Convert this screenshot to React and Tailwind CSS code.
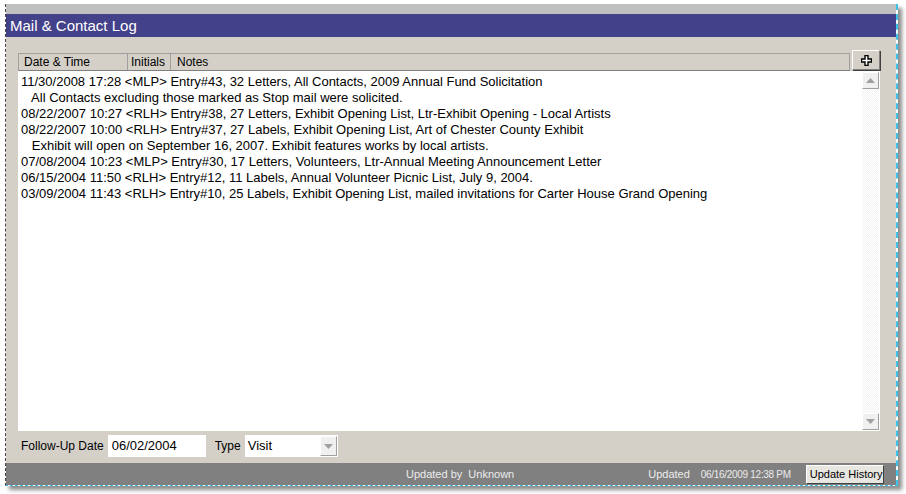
import React from "react";

const rows = [
  "11/30/2008 17:28 <MLP> Entry#43, 32 Letters, All Contacts, 2009 Annual Fund Solicitation",
  "   All Contacts excluding those marked as Stop mail were solicited.",
  "08/22/2007 10:27 <RLH> Entry#38, 27 Letters, Exhibit Opening List, Ltr-Exhibit Opening - Local Artists",
  "08/22/2007 10:00 <RLH> Entry#37, 27 Labels, Exhibit Opening List, Art of Chester County Exhibit",
  "   Exhibit will open on September 16, 2007. Exhibit features works by local artists.",
  "07/08/2004 10:23 <MLP> Entry#30, 17 Letters, Volunteers, Ltr-Annual Meeting Announcement Letter",
  "06/15/2004 11:50 <RLH> Entry#12, 11 Labels, Annual Volunteer Picnic List, July 9, 2004.",
  "03/09/2004 11:43 <RLH> Entry#10, 25 Labels, Exhibit Opening List, mailed invitations for Carter House Grand Opening",
];

function Arrow({ down }) {
  return (
    <svg width="9" height="5" viewBox="0 0 9 5">
      <polygon points={down ? "0,0 9,0 4.5,5" : "0,5 9,5 4.5,0"} fill="#a0a0a0" />
    </svg>
  );
}

export default function App() {
  return (
    <div className="w-[906px] h-[494px] bg-white overflow-hidden font-['Liberation_Sans',Arial,sans-serif] text-[12px] text-black">
      <div className="ml-[5px] mt-[4px] w-[893px] h-[482px] flex flex-col border-l border-dashed border-l-[#444] border-r-2 border-r-[#3fc0e8] border-b border-b-[#3fc0e8] shadow-[4px_4px_4px_rgba(0,0,0,0.45)]">
        <div className="h-[10px] bg-[#c0c0c0]" />
        <div className="h-[23px] bg-[#43418a] text-white text-[15px] leading-[23px] pl-[4px]">
          Mail &amp; Contact Log
        </div>
        <div className="flex-1 bg-[#d4d0c8] pl-[12px] pr-[16px] pt-[13px] flex flex-col">
          <div className="flex items-end gap-[2px]">
            <div className="flex-1 h-[18px] flex bg-[#d4d0c8] border border-[#a0a0a0] border-b-[#808080] leading-[16px]">
              <div className="w-[109px] pl-[5px] border-r border-[#a0a0a0]">Date &amp; Time</div>
              <div className="w-[43px] pl-[3px] border-r border-[#a0a0a0]">Initials</div>
              <div className="flex-1 pl-[6px]">Notes</div>
            </div>
            <div className="w-[28px] h-[20px] mb-[1px] flex items-center justify-center bg-[#d4d0c8] border border-white border-r-[#808080] border-b-[#808080] shadow-[1px_1px_0_#404040]">
              <svg width="11" height="11" viewBox="0 0 11 11">
                <path d="M4 0.5h3v3.5h3.5v3h-3.5v3.5h-3v-3.5h-3.5v-3h3.5z" fill="#fff" stroke="#000" strokeWidth="1.4" />
              </svg>
            </div>
          </div>
          <div className="h-[360px] bg-white flex">
            <div className="flex-1 pt-[3px] pl-[3px] text-[13px] leading-[16px] whitespace-pre">
              {rows.map((r, i) => (
                <div key={i}>{r}</div>
              ))}
            </div>
            <div className="w-[17px] mr-[1px] my-[1px] flex flex-col bg-[repeating-conic-gradient(#f4f4f4_0%_25%,#ffffff_0%_50%)] bg-[length:2px_2px]">
              <div className="h-[17px] flex items-center justify-center bg-[#f0f0f0] border border-white border-r-[#a0a0a0] border-b-[#a0a0a0]">
                <Arrow />
              </div>
              <div className="flex-1" />
              <div className="h-[17px] flex items-center justify-center bg-[#f0f0f0] border border-white border-r-[#a0a0a0] border-b-[#a0a0a0]">
                <Arrow down />
              </div>
            </div>
          </div>
          <div className="flex items-center mt-[4px] h-[22px] pl-[3px]">
            <span>Follow-Up Date</span>
            <div className="ml-[4px] w-[98px] h-[22px] bg-white pl-[4px] leading-[22px] text-[13px]">06/02/2004</div>
            <span className="ml-[9px]">Type</span>
            <div className="ml-[4px] w-[93px] h-[22px] bg-white flex items-center">
              <span className="flex-1 pl-[3px] text-[13px]">Visit</span>
              <div className="w-[17px] h-[20px] mr-[1px] flex items-center justify-center bg-[#f0f0f0] border border-white border-r-[#a0a0a0] border-b-[#a0a0a0]">
                <Arrow down />
              </div>
            </div>
          </div>
        </div>
        <div className="h-[22px] bg-[#808080] flex items-center text-[#ececec] text-[11px] pl-[400px]">
          <span className="whitespace-pre">Updated by  Unknown</span>
          <span className="ml-[134px]">Updated</span>
          <span className="ml-[11px] text-[10px] tracking-[-0.3px]">06/16/2009 12:38 PM</span>
          <div className="ml-[15px] w-[78px] h-[19px] bg-[#e8e6e0] text-black text-[11px] leading-[17px] pl-[3px] border border-white border-r-[#404040] border-b-[#404040] whitespace-nowrap">
            Update History
          </div>
        </div>
      </div>
    </div>
  );
}
